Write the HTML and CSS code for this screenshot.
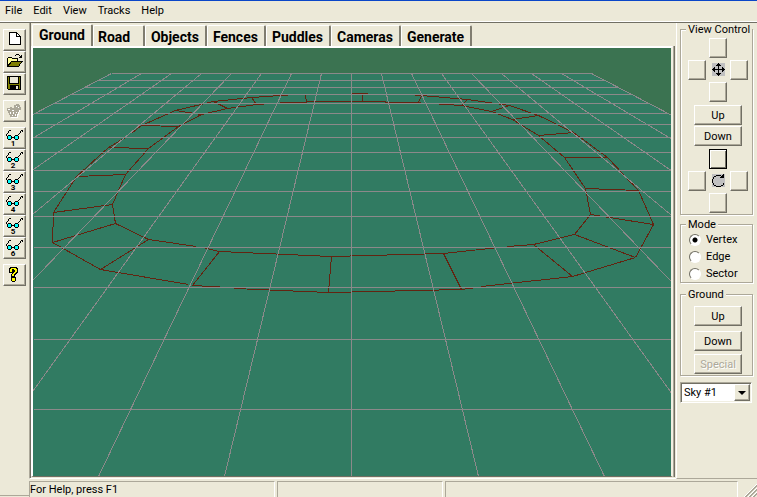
FILE: index.html
```html
<!DOCTYPE html>
<html lang="en">
<head>
    <meta charset="UTF-8">
    <meta name="viewport" content="width=device-width, initial-scale=1.0">
    <title>Track Editor</title>
    <link rel="stylesheet" href="styles.css">
</head>
<body>

<!-- Shared icon parts -->
<svg class="defs" width="0" height="0" aria-hidden="true">
    <symbol id="glasses" viewBox="0 0 19 18">
        <path d="M1 5H2V6H1ZM2 4H3V5H2ZM3 3H4V4H3ZM3 2H4V3H3ZM4 1H5V2H4ZM5 1H6V2H5ZM1 6H2V7H1ZM13 5H14V6H13ZM14 4H15V5H14ZM15 3H16V4H15ZM15 2H16V3H15ZM16 1H17V2H16ZM17 1H18V3H17Z" fill="#000"/>
        <path d="M3 6H6V7H7V8H9V7H10V6H13V7H14V10H13V11H10V10H9V9H7V10H6V11H3V10H2V7H3Z" fill="#000"/>
        <path d="M3 7H6V10H3ZM10 7H13V10H10Z" fill="#0ff"/>
    </symbol>
</svg>

<nav class="menubar">
    <button class="menu-item">File</button>
    <button class="menu-item">Edit</button>
    <button class="menu-item">View</button>
    <button class="menu-item">Tracks</button>
    <button class="menu-item">Help</button>
</nav>

<div class="window">

    <!-- Left toolbar -->
    <div class="toolbar">
        <div class="tool-group">
            <button class="tool" aria-label="New">
                <svg viewBox="0 0 19 18"><path d="M4.500 1.500H11.500L15.500 5.500V13.500H4.500Z" fill="#fff" stroke="#000"/><path d="M11.500 1.500V5.500H15.500" fill="none" stroke="#000"/></svg>
            </button>
            <button class="tool" aria-label="Open">
                <svg viewBox="0 0 19 18">
                    <path d="M2.500 13.500V5.500L3.500 4.500H6.500L7.500 5.500H12.500V8.500" fill="#ff9" stroke="#000"/>
                    <path d="M2.500 13.500L6.500 8.500H17L13.500 13.500Z" fill="#808000" stroke="#000"/>
                    <path d="M10 2H11V1H14V2H15V3H16V2H17V5H14V4H15V3H14V2H11V3H10Z" fill="#000"/>
                </svg>
            </button>
            <button class="tool" aria-label="Save">
                <svg viewBox="0 0 19 18">
                    <path d="M2.500 1.500H15.500V14.500H3.500L2.500 13.500Z" fill="#808000" stroke="#000"/>
                    <path d="M5 2H13V8H5Z" fill="#ece9d8"/>
                    <path d="M4 2H5V8H13V2H14V9H4ZM5 10H14V15H5Z" fill="#000"/>
                    <path d="M11 11H13V14H11Z" fill="#ece9d8"/>
                </svg>
            </button>
        </div>
        <div class="tool-group">
            <button class="tool" aria-label="Delete" disabled>
                <svg viewBox="0 0 19 18">
                    <path d="M5 8H15V10H14V13H13V16H6V14H5Z" fill="#fff"/>
                    <path d="M2 6H5V5H7V6H9V3H11V2H14V3H15V5H16V8H14V10H13V12H12V15H5V13H4V11H3V9H2Z" fill="#aca899"/>
                    <path d="M3 7H5V8H3ZM7 8H9V9H7ZM5 10H6V12H5ZM8 10H9V12H8ZM11 10H12V11H11ZM7 13H8V14H7ZM10 12H11V14H10ZM11 4H12V5H11ZM13 5H14V6H13Z" fill="#fff"/>
                </svg>
            </button>
        </div>
        <div class="tool-group">
            <button class="tool" aria-label="View 1"><svg viewBox="0 0 19 18"><use href="#glasses"/><text x="8" y="17">1</text></svg></button>
            <button class="tool" aria-label="View 2"><svg viewBox="0 0 19 18"><use href="#glasses"/><text x="8" y="17">2</text></svg></button>
            <button class="tool" aria-label="View 3"><svg viewBox="0 0 19 18"><use href="#glasses"/><text x="8" y="17">3</text></svg></button>
            <button class="tool" aria-label="View 4"><svg viewBox="0 0 19 18"><use href="#glasses"/><text x="8" y="17">4</text></svg></button>
            <button class="tool" aria-label="View 5"><svg viewBox="0 0 19 18"><use href="#glasses"/><text x="8" y="17">5</text></svg></button>
            <button class="tool" aria-label="View 6"><svg viewBox="0 0 19 18"><use href="#glasses"/><text x="8" y="17">6</text></svg></button>
        </div>
        <div class="tool-group">
            <button class="tool" aria-label="Help">
                <svg viewBox="0 0 19 18">
                    <path d="M5 1H12V2H13V7H12V8H11V9H10V11H11V15H10V16H7V15H6V11H6V8H7V7H8V6H8V4H8V7H4V2H5Z" fill="#000"/>
                    <path d="M6 2H11V3H12V6H11V7H10V8H9V10H7V8H8V7H9V6H10V4H9V3H7V6H5V3H6ZM7 12H10V15H7Z" fill="#ff0"/>
                </svg>
            </button>
        </div>
    </div>

    <!-- Editor -->
    <main class="editor">
        <div class="tabs" role="tablist">
            <button class="tab active" role="tab" aria-selected="true">Ground</button>
            <button class="tab short" role="tab">Road</button>
            <button class="tab" role="tab">Objects</button>
            <button class="tab" role="tab">Fences</button>
            <button class="tab" role="tab">Puddles</button>
            <button class="tab" role="tab">Cameras</button>
            <button class="tab" role="tab">Generate</button>
        </div>
        <svg class="scene" viewBox="33 48 638 428" preserveAspectRatio="xMidYMid slice" role="img" aria-label="Track view">
            <path class="ground" d="M111 73H591L1364 476H-662Z"/>
            <g transform="translate(.5 .5)">
                <path class="track" d="M295 94L251 97L213 101L175 110L141 125L132 132M125 137L108 147L76 176L53 212L52 242L100 269L188 284M192 285L228 287M234 288L328 292L461 289L476 287M481 286L572 276L635 257L653 224L638 190L607 157L573 132L538 115L509 105L467 99L421 95L407 94M350 93H367"/>
                <path class="track" d="M272 103L256 104L227 108L201 114L178 126L148 148L125 174L112 204L115 223L148 239L196 246M202 247L219 251L331 256L443 253L498 247M507 246L533 244L574 234L590 214L585 188L564 157L538 135L512 119L491 111L461 105L431 103M279 102H306V101H385V102H420"/>
                <path class="track" d="M305 94L306 102M251 97L256 104M213 101L227 108M175 110L201 114M141 125L178 126M108 147L148 148M76 176L125 174M53 212L112 204M52 242L115 223M100 269L148 239M192 285L219 251M328 292L331 256M461 289L443 253M572 276L533 244M635 257L574 234M653 224L590 214M638 190L585 188M607 157H564M573 132L538 135M538 115L512 119M509 105L491 111M467 99L461 105M421 95L418 102M362 93V101"/>
                <path class="grid" d="M111 73H590M98 80H604M84 87H617M71 94H630M53 103H648M34 113H668M33 124H671M33 137H671M33 152H671M33 170H671M33 191H671M33 216H671M33 247H671M33 287H671M33 339H671M33 409H671"/>
                <path class="grid" d="M111 73L-662 476M141 73L-536 476M171 73L-409 476M201 73L-282 476M231 73L-156 476M261 73L-29 476M291 73L98 476M321 73L224 476M351 73V476M381 73L478 476M411 73L604 476M441 73L731 476M471 73L858 476M501 73L984 476M531 73L1111 476M561 73L1238 476M591 73L1364 476"/>
            </g>
        </svg>
    </main>

    <!-- Right panel -->
    <aside class="panel">
        <fieldset class="group view-group">
            <legend>View Control</legend>
            <div class="pad">
                <button class="btn pad-up" aria-label="Move up"></button>
                <button class="btn pad-left" aria-label="Move left"></button>
                <svg class="pad-icon" viewBox="0 0 13 13">
                    <path d="M0 0H13V13H0Z" fill="#c0c0c0"/>
                    <path d="M6 0H7V1H8V2H9V3H7V6H10V4H11V5H12V6H13V7H12V8H11V9H10V7H7V10H9V11H8V12H7V13H6V12H5V11H4V10H6V7H3V9H2V8H1V7H0V6H1V5H2V4H3V6H6V3H4V2H5V1H6Z" fill="#000"/>
                </svg>
                <button class="btn pad-right" aria-label="Move right"></button>
                <button class="btn pad-down" aria-label="Move down"></button>
            </div>
            <div class="stack">
                <button class="btn wide">Up</button>
                <button class="btn wide">Down</button>
            </div>
            <div class="pad">
                <button class="btn pad-up default" aria-label="Tilt up"></button>
                <button class="btn pad-left" aria-label="Turn left"></button>
                <svg class="pad-icon" viewBox="0 0 13 13">
                    <path d="M0 0H13V13H0Z" fill="#c0c0c0"/>
                    <path d="M4 1H9V2H4ZM2 2H4V3H2ZM1 3H2V5H1ZM0 5H1V9H0ZM1 9H2V11H1ZM2 11H4V12H2ZM4 12H9V13H4ZM9 11H11V12H9ZM11 9H12V11H11ZM8 4H12V0H11V1H10V2H9V3H8Z" fill="#000"/>
                </svg>
                <button class="btn pad-right" aria-label="Turn right"></button>
                <button class="btn pad-down" aria-label="Tilt down"></button>
            </div>
        </fieldset>

        <fieldset class="group mode-group">
            <legend>Mode</legend>
            <label class="radio"><input type="radio" name="mode" checked> Vertex</label>
            <label class="radio"><input type="radio" name="mode"> Edge</label>
            <label class="radio"><input type="radio" name="mode"> Sector</label>
        </fieldset>

        <fieldset class="group ground-group">
            <legend>Ground</legend>
            <button class="btn wide">Up</button>
            <button class="btn wide">Down</button>
            <button class="btn wide" disabled>Special</button>
        </fieldset>

        <div class="combo">
            <select class="sky" aria-label="Sky">
                <option>Sky #1</option>
            </select>
            <span class="combo-arrow"></span>
        </div>
    </aside>

    <!-- Status bar -->
    <footer class="statusbar">
        <div class="pane pane-help">For Help, press F1</div>
        <div class="pane pane-mid"></div>
        <div class="pane pane-wide"></div>
        <svg class="grip" viewBox="0 0 13 13">
            <path d="M0 13L13 0M4 13L13 4M8 13L13 8" stroke="#fff" fill="none"/>
            <path d="M1 13L13 1M2 13L13 2M5 13L13 5M6 13L13 6M9 13L13 9M10 13L13 10" stroke="#aca899" fill="none"/>
        </svg>
    </footer>
</div>

</body>
</html>
```

FILE: styles.css
```css
/* General Reset */
* {
    margin: 0;
    padding: 0;
    box-sizing: border-box;
}

body {
    display: flex;
    flex-direction: column;
    height: 100vh;
    overflow: hidden;
    background-color: #ece9d8;
    color: #000;
    font-family: Roboto, "Liberation Sans", sans-serif;
    font-size: 11px;
    line-height: 13px;
}

button, select, input {
    font: inherit;
    color: inherit;
}

svg {
    display: block;
}

.defs {
    position: absolute;
}

/* Menu */
.menubar {
    display: flex;
    gap: 11px;
    height: 22px;
    padding: 1px 5px 0;
    border-top: 1px solid #0a46c8;
    border-bottom: 1px solid #fff;
}

.menu-item {
    height: 16px;
    border: none;
    background: none;
}

/* Main Window */
.window {
    display: grid;
    grid-template-columns: 29px 1fr 81px;
    grid-template-rows: 1fr 18px;
    flex: 1;
    min-height: 0;
    border-top: 1px solid #716f64;
}

/* Toolbar */
.toolbar {
    grid-row: 1 / 3;
    display: flex;
    flex-direction: column;
    gap: 5px;
    margin-bottom: 1px;
    padding: 6px 3px;
    border-bottom: 1px solid #aca899;
}

.tool-group {
    display: flex;
    flex-direction: column;
}

.tool {
    width: 23px;
    height: 22px;
    border: 1px solid;
    border-color: #fff #716f64 #716f64 #fff;
    box-shadow: inset -1px -1px 0 #aca899;
    background-color: #ece9d8;
}

.tool svg {
    width: 19px;
    height: 18px;
    margin: 1px;
    shape-rendering: crispEdges;
}

.tool text {
    font-size: 8px;
    font-weight: bold;
    text-anchor: middle;
}

/* Editor */
.editor {
    display: flex;
    flex-direction: column;
    min-width: 0;
    min-height: 0;
    border-left: 1px solid #aca899;
    border-bottom: 1px solid #fff;
    box-shadow: inset 1px 0 0 #716f64, inset 0 -1px 0 #ece9d8;
    padding: 0 3px 1px 1px;
}

.tabs {
    display: flex;
    align-items: flex-end;
    height: 23px;
    margin-left: 1px;
}

.tab {
    height: 21px;
    padding: 1px 6px 0 5px;
    border: 1px solid #fff;
    border-right: 2px solid #807d70;
    border-bottom: 0;
    border-radius: 2px 2px 0 0;
    background-color: #ece9d8;
    font-size: 14px;
    font-weight: bold;
    line-height: 16px;
    text-align: left;
}

.tab.active {
    height: 22px;
    padding: 0 6px 2px;
}

.tab.short {
    width: 52px;
    padding-left: 4px;
}

.scene {
    flex: 1;
    width: 100%;
    min-height: 0;
    border: solid;
    border-width: 2px 2px 1px 2px;
    border-color: #fff #f1efe2 #716f64 #fff;
    box-shadow: 1px 0 0 #aca899, 2px 0 0 #716f64;
    background-color: #3b7351;
    shape-rendering: crispEdges;
}

.ground {
    fill: #317b62;
}

.grid {
    fill: none;
    stroke: #8b898a;
}

.track {
    fill: none;
    stroke: #632411;
}

/* Right Panel */
.panel {
    display: flex;
    flex-direction: column;
    padding: 0 3px;
    border-left: 1px solid #fff;
    border-bottom: 1px solid #aca899;
}

.group {
    width: 73px;
    min-width: 0;
    border: 1px solid #aca899;
    box-shadow: 1px 1px 0 #fff, inset 1px 1px 0 #fff;
}

.group legend {
    margin-left: 5px;
    padding: 0 2px;
    background-color: #ece9d8;
    white-space: nowrap;
}

.btn {
    border: 1px solid;
    border-color: #fff #716f64 #716f64 #fff;
    box-shadow: inset -1px -1px 0 #aca899;
    background-color: #ece9d8;
}

.btn.wide {
    width: 48px;
    height: 20px;
}

.btn.default {
    border-color: #000;
    box-shadow: inset 1px 1px 0 #fff, inset -1px -1px 0 #716f64;
}

.btn:disabled {
    color: #aca899;
    text-shadow: 1px 1px 0 #fff;
}

.view-group {
    padding-bottom: 1px;
}

.pad {
    display: grid;
    grid-template-columns: repeat(3, 18px);
    grid-template-rows: repeat(3, 20px);
    grid-template-areas: ". up ." "left icon right" ". down .";
    gap: 2px 3px;
    padding: 2px 0 0 7px;
}

.pad-up {
    grid-area: up;
}

.pad-left {
    grid-area: left;
}

.pad-right {
    grid-area: right;
}

.pad-down {
    grid-area: down;
}

.pad-icon {
    grid-area: icon;
    width: 13px;
    height: 13px;
    margin: 3px 0 0 3px;
    shape-rendering: crispEdges;
}

.stack {
    display: flex;
    flex-direction: column;
    gap: 1px;
    padding: 3px 0 1px 13px;
}

.mode-group {
    margin-top: 3px;
}

.radio {
    display: flex;
    align-items: center;
    gap: 5px;
    height: 17px;
    padding-left: 8px;
}

.radio input {
    appearance: none;
    width: 12px;
    height: 12px;
    border: 1px solid;
    border-color: #716f64 #fff #fff #716f64;
    border-radius: 50%;
    background-color: #fff;
}

.radio input:checked {
    background-image: radial-gradient(circle, #000 2px, #fff 3px);
}

.ground-group {
    margin-top: 5px;
    padding-bottom: 1px;
}

.ground-group .btn {
    display: block;
    margin: 5px 0 0 13px;
}

.ground-group .btn:last-child {
    margin-top: 3px;
}

.combo {
    position: relative;
    width: 72px;
    height: 21px;
    margin-top: 6px;
}

.sky {
    appearance: none;
    width: 100%;
    height: 100%;
    padding-left: 3px;
    border: 1px solid;
    border-color: #aca899 #fff #fff #aca899;
    box-shadow: inset 1px 1px 0 #716f64, inset -1px -1px 0 #f1efe2;
    background-color: #fff;
}

.combo-arrow {
    position: absolute;
    top: 2px;
    right: 2px;
    bottom: 2px;
    width: 16px;
    border: 1px solid;
    border-color: #fff #716f64 #716f64 #fff;
    box-shadow: inset -1px -1px 0 #aca899;
    background-color: #ece9d8;
    pointer-events: none;
}

.combo-arrow::after {
    content: "";
    display: block;
    margin: 6px auto 0;
    width: 0;
    border: 4px solid transparent;
    border-top-color: #000;
    border-bottom: 0;
}

/* Status Bar */
.statusbar {
    grid-column: 2 / 4;
    display: flex;
    gap: 2px;
    padding-top: 2px;
}

.pane {
    border: 1px solid;
    border-color: #aca899 #fff #fff #aca899;
    border-bottom: 0;
    line-height: 15px;
}

.pane-help {
    flex: 246;
}

.pane-mid {
    flex: 166;
}

.pane-wide {
    flex: 294;
}

.grip {
    align-self: flex-end;
    width: 13px;
    height: 13px;
    margin-left: 4px;
}
```
